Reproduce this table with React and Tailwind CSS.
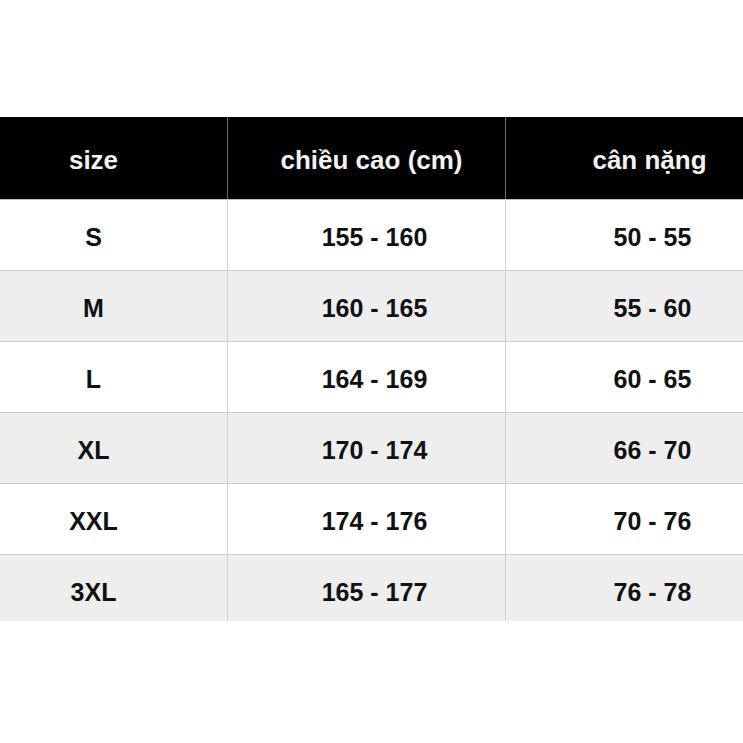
import React from "react";

const rows = [
  ["S", "155 - 160", "50 - 55"],
  ["M", "160 - 165", "55 - 60"],
  ["L", "164 - 169", "60 - 65"],
  ["XL", "170 - 174", "66 - 70"],
  ["XXL", "174 - 176", "70 - 76"],
  ["3XL", "165 - 177", "76 - 78"],
];

export default function App() {
  return (
    <div className="w-[743px] h-[743px] bg-white overflow-hidden" style={{ fontFamily: '"Liberation Sans", Arial, sans-serif' }}>
      <div className="h-[117px]" />
      <div className="grid grid-cols-[227px_278px_238px] h-[83px] bg-black border-b border-[#bdbdbd] text-[#f2f2f2] text-[26px] font-bold">
        <div className="flex items-center justify-center pr-[40px] pt-[4px]">size</div>
        <div className="flex items-center justify-center pl-[10px] pt-[4px] border-l border-[#6a6a6a]">chiều cao (cm)</div>
        <div className="flex items-center justify-center pl-[50px] pt-[4px] border-l border-[#6a6a6a]">cân nặng</div>
      </div>
      {rows.map((r, i) => {
        const last = i === rows.length - 1;
        const pt = last ? "pt-[9px] " : "pt-[5px] ";
        return (
          <div
            key={r[0]}
            className={
              "grid grid-cols-[227px_278px_238px] text-[25px] font-bold text-[#111111] " +
              (i % 2 === 1 ? "bg-[#eeeeee] " : "bg-white ") +
              (last ? "h-[66px]" : "h-[71px] border-b border-[#cccccc]")
            }
          >
            <div className={"flex items-center justify-center pr-[40px] " + pt}>{r[0]}</div>
            <div className={"flex items-center justify-center pl-[16px] border-l border-[#d0d0d0] " + pt}>{r[1]}</div>
            <div className={"flex items-center justify-center pl-[56px] border-l border-[#d0d0d0] " + pt}>{r[2]}</div>
          </div>
        );
      })}
    </div>
  );
}
